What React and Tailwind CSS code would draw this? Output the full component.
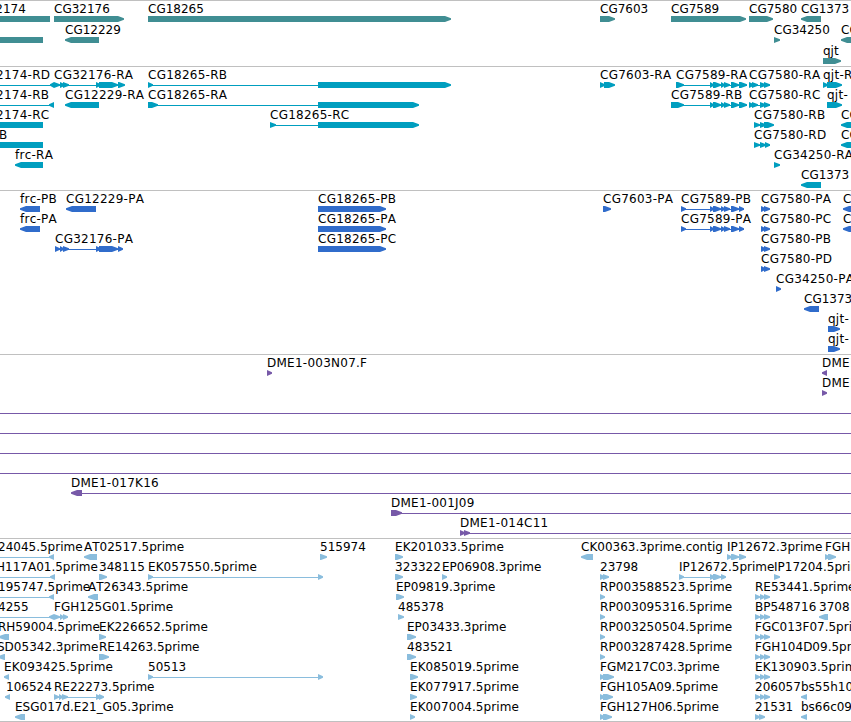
const exonsRA = [[710, 714], [713, 721], [721, 725], [724, 730], [731, 739], [739, 747]]
const exonsP = [[681, 686], [710, 714], [713, 721], [721, 725], [724, 730], [731, 739], [739, 744]]
const triple = [[755, 760], [760, 765], [764, 770]]

// feature: [label, label x, blocks, intron line]
// a block is [start, end]; start > end means it points left
const tracks = [
  {
    name: 'genes',
    color: '#408e93',
    trackClass: 'pb-px',
    rowClass: 'h-[21px]',
    rows: [
      [
        ['CG32174', -30, [[50, -40]]],
        ['CG32176', 54, [[54, 124]]],
        ['CG18265', 148, [[148, 451]]],
        ['CG7603', 600, [[600, 615]]],
        ['CG7589', 671, [[671, 746]]],
        ['CG7580', 749, [[749, 773]]],
        ['CG1373', 801, [[821, 801]]],
      ],
      [
        ['', 0, [[43, -40]]],
        ['CG12229', 65, [[99, 65]]],
        ['CG34250', 774, [[774, 780]]],
        ['CG', 841, [[880, 841]]],
      ],
      [['qjt', 823, [[823, 841]]]],
    ],
  },
  {
    name: 'transcripts',
    color: '#009ebf',
    trackClass: 'pb-[2px]',
    rowClass: 'h-5',
    rows: [
      [
        ['CG32174-RD', -30, [[54, 50]], [0, 50]],
        ['CG32176-RA', 54, [[54, 60], [60, 65], [63, 69], [96, 101], [99, 118], [118, 125]], [54, 120]],
        ['CG18265-RB', 148, [[148, 153], [318, 451]], [148, 318]],
        ['CG7603-RA', 600, [[600, 605], [604, 615]]],
        ['CG7589-RA', 676, [[676, 684], ...exonsRA], [676, 747]],
        ['CG7580-RA', 749, [[749, 754], [752, 758], [760, 766], [764, 770]], [749, 770]],
        ['qjt-R', 823, [[823, 828], [827, 842]]],
      ],
      [
        ['CG32174-RB', -30, [[54, 49]], [0, 50]],
        ['CG12229-RA', 65, [[99, 65]]],
        ['CG18265-RA', 148, [[148, 158], [318, 419]], [148, 318]],
        ['CG7589-RB', 671, [[671, 684], ...exonsRA], [676, 747]],
        ['CG7580-RC', 749, [[749, 754], [752, 758], [760, 766], [764, 770]], [749, 770]],
        ['qjt-', 827, [[827, 842]]],
      ],
      [
        ['CG32174-RC', -30, [[43, -40]]],
        ['CG18265-RC', 270, [[270, 276], [318, 419]], [270, 318]],
        ['CG7580-RB', 754, [[754, 760], [760, 766], [764, 774]], [754, 770]],
        ['CG', 841, [[880, 841]]],
      ],
      [
        ['B', -1, [[43, -40]]],
        ['CG7580-RD', 754, [[754, 760], [760, 766], [765, 770]], [754, 770]],
        ['CG', 841, [[880, 841]]],
      ],
      [
        ['frc-RA', 15, [[43, 15]]],
        ['CG34250-RA', 774, [[774, 780]]],
      ],
      [['CG1373', 801, [[821, 801]]]],
    ],
  },
  {
    name: 'proteins',
    color: '#306ccb',
    trackClass: 'pb-[2px]',
    rowClass: 'h-5',
    rows: [
      [
        ['frc-PB', 20, [[40, 20]]],
        ['CG12229-PA', 66, [[96, 66]]],
        ['CG18265-PB', 318, [[318, 386]]],
        ['CG7603-PA', 603, [[603, 611]]],
        ['CG7589-PB', 681, exonsP, [681, 744]],
        ['CG7580-PA', 761, [[761, 766], [764, 770]]],
        ['CG', 843, [[880, 843]]],
      ],
      [
        ['frc-PA', 20, [[40, 20]]],
        ['CG18265-PA', 318, [[318, 386]]],
        ['CG7589-PA', 681, exonsP, [681, 744]],
        ['CG7580-PC', 761, [[761, 766], [764, 770]]],
        ['CG', 843, [[880, 843]]],
      ],
      [
        ['CG32176-PA', 55, [[55, 60], [60, 64], [63, 69], [96, 101], [99, 118], [118, 123]], [55, 120]],
        ['CG18265-PC', 318, [[318, 386]]],
        ['CG7580-PB', 761, [[761, 766], [764, 770]]],
      ],
      [['CG7580-PD', 761, [[761, 766], [764, 770]]]],
      [['CG34250-PA', 776, [[776, 781]]]],
      [['CG1373', 804, [[819, 804]]]],
      [['qjt-', 828, [[828, 840]]]],
      [['qjt-', 828, [[828, 840]]]],
    ],
  },
  {
    name: 'bacs',
    color: '#7759a8',
    trackClass: 'pb-[2px]',
    rowClass: 'h-5',
    rows: [
      [
        ['DME1-003N07.F', 267, [[267, 272]]],
        ['DME1-', 822, [[827, 822]]],
      ],
      [['DME1-', 822, [[822, 827]]]],
      [['', 0, [], [0, 851]]],
      [['', 0, [], [0, 851]]],
      [['', 0, [], [0, 851]]],
      [['', 0, [], [0, 851]]],
      [['DME1-017K16', 71, [[82, 71]], [82, 851]]],
      [['DME1-001J09', 391, [[391, 402]], [400, 851]]],
      [['DME1-014C11', 460, [[460, 465], [464, 470]], [464, 851]]],
    ],
  },
  {
    name: 'ests',
    color: '#8abddd',
    trackClass: 'pb-px border-b',
    rowClass: 'h-5',
    rows: [
      [
        ['24045.5prime', -2, [[54, 49]], [0, 50]],
        ['AT02517.5prime', 84, [[97, 84]]],
        ['515974', 320, [[320, 327]]],
        ['EK201033.5prime', 395, [[395, 403]]],
        ['CK00363.3prime.contig', 581, [[593, 581]]],
        ['IP12672.3prime', 727, [[727, 732], [731, 739], [739, 746]], [727, 746]],
        ['FGH', 825, [[825, 830], [828, 836]]],
      ],
      [
        ['H117A01.5prime', -4, [[55, 50]], [0, 50]],
        ['348115', 99, [[99, 107]]],
        ['EK057550.5prime', 148, [[148, 153], [318, 323]], [148, 318]],
        ['323322', 395, [[395, 403]]],
        ['EP06908.3prime', 442, [[442, 447]]],
        ['23798', 600, [[600, 605], [603, 609]]],
        ['IP12672.5prime', 679, [[679, 684], [710, 715], [713, 721], [721, 726]], [679, 724]],
        ['IP17204.5prime', 774, [[774, 780]]],
      ],
      [
        ['195747.5prime', -2, [[54, 49]], [0, 50]],
        ['AT26343.5prime', 88, [[98, 88]]],
        ['EP09819.3prime', 396, [[396, 404]]],
        ['RP003588523.5prime', 600, [[600, 605]]],
        ['RE53441.5prime', 755, triple],
      ],
      [
        ['4255', -2, [[54, 49]], [0, 50]],
        ['FGH125G01.5prime', 54, [[54, 60], [60, 64], [63, 68]], [54, 66]],
        ['485378', 398, [[398, 404]]],
        ['RP003095316.5prime', 600, [[600, 605]]],
        ['BP548716', 755, triple],
        ['3708', 819, [[828, 819]]],
      ],
      [
        ['RH59004.5prime', -2, [[9, -1]]],
        ['EK226652.5prime', 99, [[99, 106]]],
        ['EP03433.3prime', 407, [[407, 416]]],
        ['RP003250504.5prime', 600, [[600, 605]]],
        ['FGC013F07.5prime', 755, triple],
      ],
      [
        ['SD05342.3prime', -3, [[5, -2]]],
        ['RE14263.5prime', 99, [[99, 109]]],
        ['483521', 407, [[407, 416]]],
        ['RP003287428.5prime', 600, [[600, 605]]],
        ['FGH104D09.5prime', 755, triple],
      ],
      [
        ['EK093425.5prime', 4, [[9, 4]]],
        ['50513', 148, [[148, 153], [318, 323]], [148, 318]],
        ['EK085019.5prime', 410, [[410, 418]]],
        ['FGM217C03.3prime', 600, [[600, 605], [603, 614]]],
        ['EK130903.5prime', 755, triple],
      ],
      [
        ['106524', 6, [[10, 5]]],
        ['RE22273.5prime', 54, [[54, 59], [59, 63], [62, 68], [96, 101], [99, 104]], [54, 100]],
        ['EK077917.5prime', 410, [[410, 417]]],
        ['FGH105A09.5prime', 600, [[600, 605], [603, 613]]],
        ['206057', 755, triple],
        ['bs55h10', 801, [[807, 801]]],
      ],
      [
        ['ESG017d.E21_G05.3prime', 15, [[25, 15]]],
        ['EK007004.5prime', 410, [[410, 415]]],
        ['FGH127H06.5prime', 600, [[600, 605], [603, 612]]],
        ['21531', 755, [[755, 760], [759, 765]]],
        ['bs66c09', 801, [[807, 801]]],
      ],
    ],
  },
]

function arrow([from, to]) {
  const tip = Math.min(Math.abs(to - from), 6)
  const neck = to > from ? to - tip : to + tip
  return `${from},14 ${neck},14 ${to},16.2 ${to},17.8 ${neck},20 ${from},20`
}

function spacing(label) {
  if (label.includes('-')) return 'tracking-[0.25px]'
  if (/^(RP|EK)/.test(label)) return 'tracking-[0.08px]'
  return 'tracking-normal'
}

function Row({ features, color, rowClass }) {
  return (
    <div className={`relative ${rowClass}`}>
      <svg width="851" height="20" className="block">
        {features.map(([, , blocks, line], i) => (
          <g key={i} fill={color}>
            {line && <rect x={line[0]} y="17" width={line[1] - line[0]} height="1" />}
            {blocks.map((b, j) => <polygon key={j} points={arrow(b)} />)}
          </g>
        ))}
      </svg>
      {features.map(([label, x], i) => label && (
        <span key={i} className={`absolute top-0 leading-[14px] ${spacing(label)}`} style={{ left: x }}>{label}</span>
      ))}
    </div>
  )
}

export default function App() {
  return (
    <div className="w-[851px] h-[722px] overflow-hidden bg-white text-black text-[12px] whitespace-nowrap [font-kerning:none] font-['DejaVu_Sans',sans-serif]">
      {tracks.map(t => (
        <div key={t.name} className={`border-t border-[#c0c0c0] pt-px ${t.trackClass}`}>
          {t.rows.map((features, i) => (
            <Row key={i} features={features} color={t.color} rowClass={t.rowClass} />
          ))}
        </div>
      ))}
    </div>
  )
}
